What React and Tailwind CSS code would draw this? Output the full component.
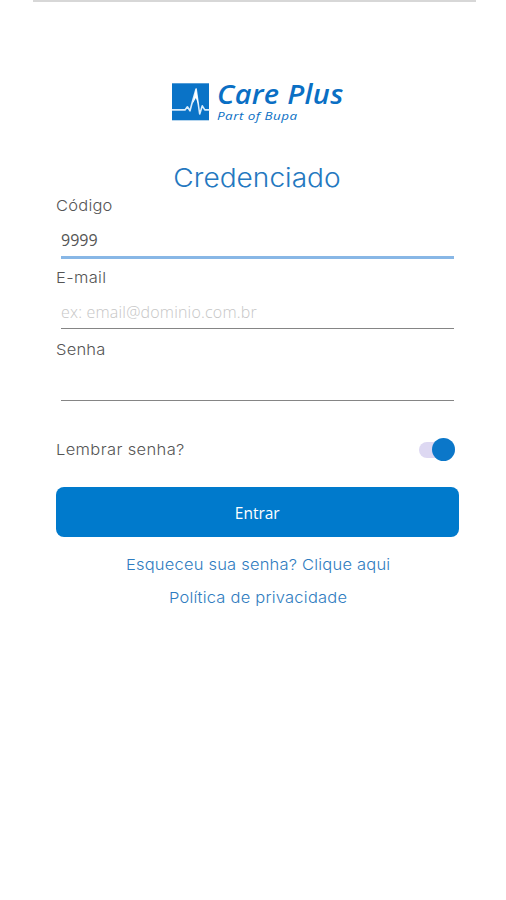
import React, { useState } from 'react';

const Logo = () => (
  <div className="flex h-10 items-start pl-[116px]">
    <svg className="mt-[1px] h-[38px] w-[38px] shrink-0" viewBox="0 0 38 38" fill="none">
      <rect x="0" y="0.3" width="37" height="37" fill="#0a73c7" />
      <path
        d="M0 26.9H13L15.4 23.8L18 27.8L20.6 18L24.1 6L27.7 31L30.3 22.8L32.8 26.9H37.5"
        stroke="#d9ecfb"
        strokeWidth="1.6"
        strokeLinejoin="round"
      />
      <path d="M20.4 21L24.1 5L26.8 23L23.9 15Z" fill="#fff" />
    </svg>
    <div className="-mt-[3px] ml-[7px] whitespace-nowrap font-['Open_Sans',sans-serif] italic text-[#0a6fc4]">
      <div className="h-[30px] origin-left scale-x-[1.07] text-[27px] font-semibold leading-[29px] tracking-[0.3px]">Care Plus</div>
      <div className="h-[14px] origin-left scale-x-[1.17] text-[11.5px] font-medium leading-[14px] tracking-[0.4px]">Part of Bupa</div>
    </div>
  </div>
);

const Field = ({ label, labelClass, line, ...props }) => (
  <label className="block h-[72px]">
    <span className={`block h-6 origin-left scale-x-110 text-[15px] leading-6 text-[#555] ${labelClass}`}>{label}</span>
    <span className="block pl-[5px] pr-1">
      <input
        className={`block w-full bg-transparent font-['Open_Sans',sans-serif] text-[16px] outline-none placeholder:text-[#c6c6c6] placeholder:opacity-100 ${line}`}
        {...props}
      />
    </span>
  </label>
);

const App = () => {
  const [code, setCode] = useState('9999');
  const [email, setEmail] = useState('');
  const [password, setPassword] = useState('');
  const [remember, setRemember] = useState(true);

  return (
    <div className="min-h-[900px] overflow-x-hidden bg-white font-['Inter',sans-serif] font-light">
      <div className="ml-[33px] mr-[30px] h-[2px] bg-[#d7d7d7]" />

      <main className="ml-14 mr-[48px] pt-20">
        <Logo />

        <h1 className="mt-[40px] h-8 scale-x-[1.08] whitespace-nowrap text-center text-[26px] leading-8 text-[#2478c0]">
          Credenciado
        </h1>

        <form onSubmit={(e) => e.preventDefault()}>
          <Field
            label="Código"
            labelClass="tracking-[0.2px]"
            line="h-[41px] border-b-[3px] border-[#88b7e6] pt-[6px] font-normal text-[#555]"
            value={code}
            onChange={(e) => setCode(e.target.value)}
          />
          <Field
            label="E-mail"
            labelClass="tracking-[0.3px]"
            line="h-[39px] border-b border-[#858585] pt-[6px] tracking-[0.2px] text-[#555]"
            placeholder="ex: email@dominio.com.br"
            value={email}
            onChange={(e) => setEmail(e.target.value)}
          />
          <Field
            label="Senha"
            labelClass="tracking-[0.2px]"
            line="h-[39px] border-b border-[#858585] pt-[6px] text-[#555]"
            type="password"
            value={password}
            onChange={(e) => setPassword(e.target.value)}
          />

          <div className="mt-[28px] flex h-6 items-center justify-between pr-[3.5px]">
            <span className="origin-left scale-x-110 text-[15px] leading-6 tracking-[0.33px] text-[#555]">Lembrar senha?</span>
            <button
              type="button"
              role="switch"
              aria-checked={remember}
              onClick={() => setRemember(!remember)}
              className={`-mt-px flex h-4 w-9 items-center rounded-full bg-[#ddd8f2] ${remember ? 'justify-end' : 'justify-start'}`}
            >
              <span className="h-[23px] w-[23px] shrink-0 rounded-full bg-[#0b77c9]" />
            </button>
          </div>

          <button
            type="submit"
            className="mt-[25px] block h-[50px] w-[402.5px] rounded-[8px] bg-[#007acc] pt-[3px] text-center font-['Open_Sans',sans-serif] text-[15.5px] font-normal text-white"
          >
            Entrar
          </button>
        </form>

        <div className="ml-[2px] mt-[16px] flex flex-col items-center gap-[9px] whitespace-nowrap text-[15px] leading-6 text-[#2f7cc0]">
          <a href="#senha" className="scale-x-110 tracking-[0.18px]">Esqueceu sua senha? Clique aqui</a>
          <a href="#privacidade" className="scale-x-110 tracking-[0.2px]">Política de privacidade</a>
        </div>
      </main>
    </div>
  );
};

export default App;
